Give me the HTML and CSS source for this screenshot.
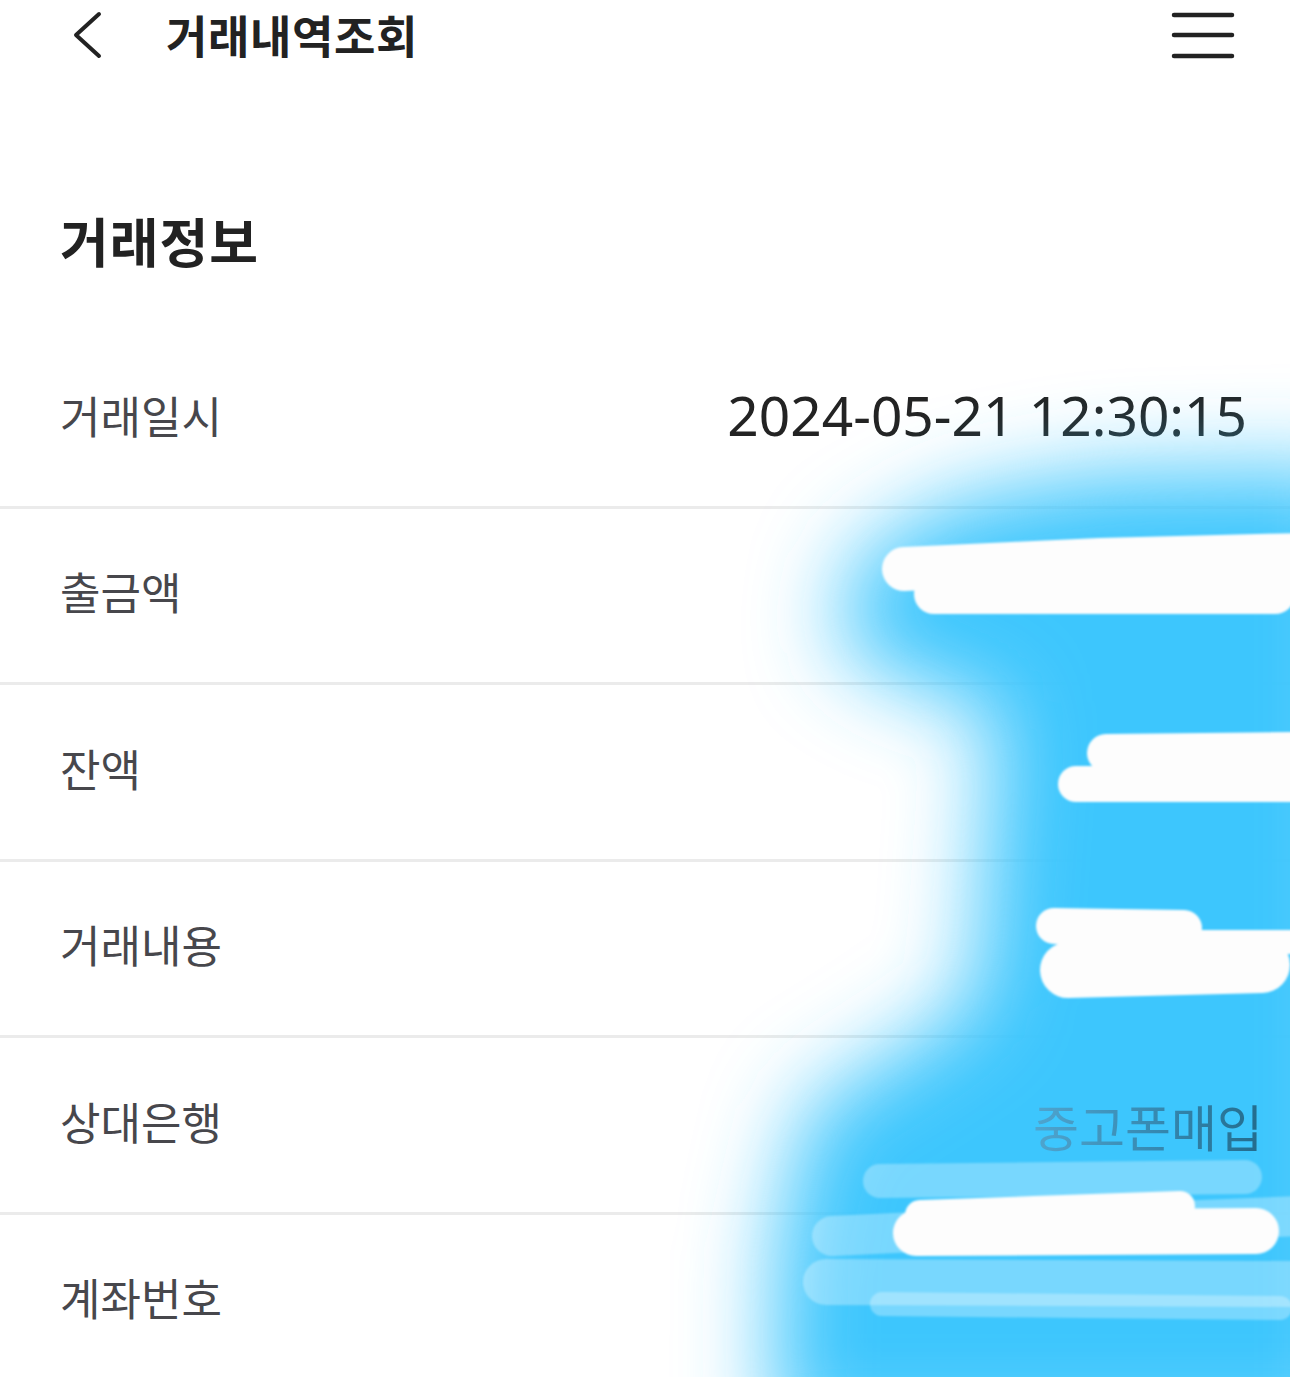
FILE: index.html
```html
<!DOCTYPE html>
<html lang="ko">
<head>
<meta charset="utf-8">
<title>거래내역조회</title>
<link rel="stylesheet" href="styles.css">
</head>
<body>
<div class="page">
  <header class="topbar">
    <div class="topbar-left">
      <svg class="back" viewBox="0 0 34 50" width="34" height="50" aria-hidden="true">
        <path d="M29 4 L6 25 L29 46" fill="none" stroke="#222" stroke-width="4" stroke-linecap="round" stroke-linejoin="round"/>
      </svg>
      <h1 class="title">거래내역조회</h1>
    </div>
    <svg class="menu" viewBox="0 0 64 50" width="64" height="50" aria-hidden="true">
      <g stroke="#222" stroke-width="4.5" stroke-linecap="round">
        <line x1="3" y1="5" x2="61" y2="5"/>
        <line x1="3" y1="25" x2="61" y2="25"/>
        <line x1="3" y1="46" x2="61" y2="46"/>
      </g>
    </svg>
  </header>

  <h2 class="section-title">거래정보</h2>

  <div class="rows">
    <div class="row"><span class="label">거래일시</span><span class="value">2024-05-21 12:30:15</span></div>
    <div class="row"><span class="label">출금액</span><span class="value"></span></div>
    <div class="row"><span class="label">잔액</span><span class="value"></span></div>
    <div class="row"><span class="label">거래내용</span><span class="value"></span></div>
    <div class="row"><span class="label">상대은행</span><span class="value value-tinted">중고폰매입</span></div>
    <div class="row"><span class="label">계좌번호</span><span class="value"></span></div>
  </div>

  <svg class="scribble" viewBox="0 0 1290 1377" width="1290" height="1377" aria-hidden="true">
    <defs>
      <filter id="soft" x="-30%" y="-20%" width="160%" height="140%">
        <feGaussianBlur stdDeviation="44"/>
      </filter>
      <filter id="edge" x="-5%" y="-20%" width="110%" height="140%">
        <feGaussianBlur stdDeviation="1.2"/>
      </filter>
    </defs>
    <path filter="url(#soft)" fill="#3ec6fd"
      d="M1360 468 L1100 474 L960 500 L858 556 L836 640 L905 684 L995 705 L985 850 L975 1000 L890 1058 L808 1108 L776 1250 L774 1440 L1360 1440 Z"/>
    <g filter="url(#edge)" fill="none" stroke-linecap="round" stroke-linejoin="round">
      <g stroke="rgba(255,255,255,0.3)">
        <path d="M880 1181 L1245 1177" stroke-width="34"/>
        <path d="M832 1236 L1000 1228 L1300 1216" stroke-width="40"/>
        <path d="M826 1282 L1300 1284" stroke-width="46"/>
        <path d="M882 1304 L1280 1308" stroke-width="24"/>
      </g>
      <g stroke="#fdfdfd">
        <path d="M904 569 L1100 560 L1300 555" stroke-width="44"/>
        <path d="M934 594 L1275 594" stroke-width="40"/>
        <path d="M1265 578 L1300 578" stroke-width="30"/>
        <path d="M1106 753 L1300 751" stroke-width="38"/>
        <path d="M1076 784 L1300 784" stroke-width="36"/>
        <path d="M1054 926 L1184 928" stroke-width="36"/>
        <path d="M1070 948 L1205 960" stroke-width="22"/>
        <path d="M1200 942 L1300 942" stroke-width="24"/>
        <path d="M1068 970 L1262 965" stroke-width="56"/>
        <path d="M920 1215 L1180 1206" stroke-width="30"/>
        <path d="M916 1233 L1256 1231" stroke-width="46"/>
      </g>
    </g>
  </svg>
</div>
</body>
</html>
```

FILE: styles.css
```css
* {
  box-sizing: border-box;
}

html, body {
  margin: 0;
  padding: 0;
  background: #ffffff;
}

body {
  font-family: "Noto Sans CJK KR", "Noto Sans", sans-serif;
  color: #222222;
  overflow: hidden;
}

.page {
  position: relative;
  width: 1290px;
  min-height: 1377px;
}

.topbar {
  height: 70px;
  display: flex;
  align-items: center;
  justify-content: space-between;
  padding: 0 55px 0 70px;
}

.topbar-left {
  display: flex;
  align-items: center;
  gap: 62px;
}

.back {
  display: block;
}

.title {
  margin: 0;
  font-size: 45px;
  font-weight: 700;
  line-height: 60px;
  letter-spacing: 0.6px;
  color: #222222;
}

.menu {
  display: block;
}

.section-title {
  margin: 140px 0 62px 60px;
  font-size: 53px;
  font-weight: 700;
  line-height: 60px;
  letter-spacing: 1px;
  color: #222222;
}

.rows {
  display: flex;
  flex-direction: column;
}

.row {
  height: 176.5px;
  border-bottom: 3px solid #ebebeb;
  display: flex;
  align-items: center;
  justify-content: space-between;
  padding: 0 43px 8px 60px;
}

.label {
  font-size: 44px;
  font-weight: 400;
  color: #47474c;
}

.value {
  font-family: "Noto Sans", "Noto Sans CJK KR", sans-serif;
  font-size: 55px;
  font-weight: 400;
  color: #232323;
}

.value-tinted {
  position: relative;
  z-index: 2;
  margin-right: -16px;
  margin-top: 8px;
  font-family: "Noto Sans CJK KR", "Noto Sans", sans-serif;
  font-size: 50px;
  color: #3588b0;
  background: linear-gradient(90deg, #4fa5cf 0%, #3588b0 55%, #236b8c 100%);
  -webkit-background-clip: text;
  background-clip: text;
  -webkit-text-fill-color: transparent;
}

.scribble {
  position: absolute;
  top: 0;
  left: 0;
  z-index: 1;
  pointer-events: none;
}
```
